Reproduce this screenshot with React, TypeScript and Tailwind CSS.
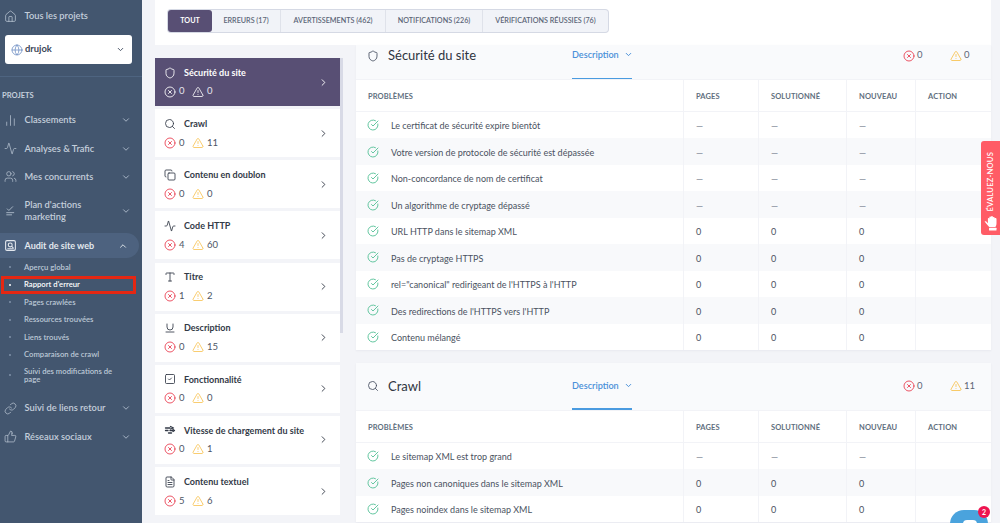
import React from "react";
import { Home, ChevronDown, ChevronUp, ChevronRight, Globe, ChartNoAxesColumn, Activity, Users, Link, ThumbsUp, Shield, Search, Copy, Type, Underline, SquareCheck, FileText, CircleX, TriangleAlert, CircleCheckBig } from "lucide-react";

function PlanIcon({ size = 13, className = "" }: { size?: number; strokeWidth?: number; className?: string }) {
  return (
    <svg width={size} height={size} viewBox="0 0 24 24" fill="none" stroke="currentColor" strokeWidth={1.6} strokeLinecap="round" strokeLinejoin="round" className={className}>
      <path d="M6 9l3 3 7-7" />
      <path d="M5 16h13" />
      <path d="M5 20h9" />
    </svg>
  );
}
function AuditIcon({ size = 13, className = "" }: { size?: number; strokeWidth?: number; className?: string }) {
  return (
    <svg width={size} height={size} viewBox="0 0 24 24" fill="none" stroke="currentColor" strokeWidth={2} strokeLinecap="round" strokeLinejoin="round" className={className}>
      <rect x="3" y="3" width="18" height="18" rx="2.5" />
      <circle cx="11.5" cy="11" r="3.6" />
      <path d="M14.2 13.8L17 16.6" />
      <path d="M7 18h10" />
    </svg>
  );
}
function SpeedIcon({ size = 12, className = "" }: { size?: number; strokeWidth?: number; className?: string }) {
  return (
    <svg width={size} height={size} viewBox="0 0 24 24" fill="none" stroke="currentColor" strokeWidth={2.6} strokeLinecap="round" strokeLinejoin="round" className={className}>
      <path d="M3 8h9" />
      <path d="M3 13h5" />
      <path d="M12 13h6" />
      <path d="M9 18h6" />
      <path d="M13 5l6 3-6 2" />
      <path d="M18 11l3 2-3 2" />
    </svg>
  );
}

const nav1 = [
  { icon: ChartNoAxesColumn, label: "Classements" },
  { icon: Activity, label: "Analyses & Trafic" },
  { icon: Users, label: "Mes concurrents" },
];
const subs = ["Aperçu global", "Rapport d'erreur", "Pages crawlées", "Ressources trouvées", "Liens trouvés", "Comparaison de crawl"];

function NavItem({ icon: Icon, label, h = "h-[28.4px]" }: { icon: any; label: React.ReactNode; h?: string }) {
  return (
    <div className={`flex items-center pl-[4px] pr-[11px] text-[#c3cedb] ${h}`}>
      <Icon size={13} strokeWidth={1.4} className="w-[13px] shrink-0 text-[#b5c1d0]" />
      <div className="ml-[7.5px] flex-1 text-[9.3px] leading-[12px] font-semibold">{label}</div>
      <ChevronDown size={10} strokeWidth={2.2} className="text-[#aebbcc]" />
    </div>
  );
}

function Sidebar() {
  return (
    <aside className="flex h-[523px] w-[142px] shrink-0 flex-col overflow-hidden bg-[#43566f]">
      <div className="flex h-[35px] items-center pb-[3px] pl-[4px] text-[#c3cedb]">
        <Home size={13} strokeWidth={1.3} />
        <span className="ml-[7.5px] text-[9.3px] font-semibold">Tous les projets</span>
      </div>
      <div className="mx-[5px] flex h-[29px] w-[127px] items-center rounded-[3px] bg-white pr-[7px] pl-[6px]">
        <Globe size={12} strokeWidth={1.6} className="text-[#6f8fc4]" />
        <span className="ml-[2px] flex-1 text-[9.4px] font-bold text-[#3b4658]">drujok</span>
        <ChevronDown size={9} strokeWidth={2.6} className="text-[#4a5568]" />
      </div>
      <div className="mt-[12px] h-px bg-[#4e6480]" />
      <div className="mt-[13px] h-[11px] pl-[2px] text-[7.6px] leading-[11px] font-bold text-[#c3cedb]">PROJETS</div>
      <div className="mt-[5px]">
        {nav1.map((n) => (
          <NavItem key={n.label} icon={n.icon} label={n.label} />
        ))}
        <NavItem icon={PlanIcon} h="h-[39px]" label={<>Plan d'actions<br />marketing</>} />
      </div>
      <div className="mt-[3px] flex h-[25px] w-[139px] shrink-0 items-center rounded-r-full bg-[#4d627f] pr-[11px] pl-[4px] text-[#e3e8ee]">
        <AuditIcon size={13} className="shrink-0" />
        <div className="ml-[7.5px] flex-1 text-[9px] font-bold">Audit de site web</div>
        <ChevronUp size={10} strokeWidth={2.2} />
      </div>
      <div className="mt-[1px]">
        {subs.map((s, i) => (
          <div
            key={s}
            className={`-mt-px ml-px flex h-[18.5px] w-[135px] items-center border-[3px] pl-[5px] text-[7.7px] font-semibold ${
              i === 1 ? "border-[#e52713] font-bold text-white" : "border-transparent text-[#bcc8d6]"
            }`}
          >
            <span className={`h-[2px] w-[2px] shrink-0 rounded-full ${i === 1 ? "bg-white" : "bg-[#7f92a8]"}`} />
            <span className="ml-[13px]">{s}</span>
          </div>
        ))}
        <div className="mt-[2px] flex h-[18px] items-center pl-[9px] text-[7.7px] leading-[8.5px] font-semibold text-[#bcc8d6]">
          <span className="h-[2px] w-[2px] shrink-0 rounded-full bg-[#7f92a8]" />
          <span className="ml-[13px] w-[96px]">Suivi des modifications de page</span>
        </div>
      </div>
      <div className="mt-[10px]">
        <NavItem icon={Link} label="Suivi de liens retour" />
        <NavItem icon={ThumbsUp} label="Réseaux sociaux" />
      </div>
    </aside>
  );
}

function Tabs() {
  const tabs = [
    ["ERREURS (17)", "w-[69px]"],
    ["AVERTISSEMENTS (462)", "w-[105px]"],
    ["NOTIFICATIONS (226)", "w-[97px]"],
    ["VÉRIFICATIONS RÉUSSIES (76)", "w-[125px]"],
  ];
  return (
    <div className="flex h-[45px] shrink-0 items-start bg-white pt-[10px] pl-[13px]">
      <div className="flex h-[22px] rounded-[3px] bg-[#f1f3f8] shadow-[0_0_0_1px_#d5d9e4]">
        <div className="flex w-[44px] items-center justify-center rounded-[3px] bg-[#584f74] pt-px text-[7.2px] font-bold text-white">TOUT</div>
        {tabs.map(([t, w], i) => (
          <div key={t} className={`flex items-center justify-center pt-px text-[7.2px] font-semibold text-[#5b6577] ${w} ${i < 3 ? "border-r border-[#dfe2ea]" : ""}`}>
            {t}
          </div>
        ))}
      </div>
    </div>
  );
}

const cards = [
  { icon: Shield, t: "Sécurité du site", e: 0, w: 0 },
  { icon: Search, t: "Crawl", e: 0, w: 11 },
  { icon: Copy, t: "Contenu en doublon", e: 0, w: 0 },
  { icon: Activity, t: "Code HTTP", e: 4, w: 60 },
  { icon: Type, t: "Titre", e: 1, w: 2 },
  { icon: Underline, t: "Description", e: 0, w: 15 },
  { icon: SquareCheck, t: "Fonctionnalité", e: 0, w: 0 },
  { icon: SpeedIcon, t: "Vitesse de chargement du site", e: 0, w: 1 },
  { icon: FileText, t: "Contenu textuel", e: 5, w: 6 },
];

function Card({ c, active }: { c: (typeof cards)[number]; active: boolean }) {
  const Icon = c.icon;
  return (
    <div className={`mb-[3.15px] flex h-[48px] shrink-0 items-center pr-[11px] pl-[9px] ${active ? "bg-[#584f74] text-white" : "bg-white text-[#333a47]"}`}>
      <div className="-mt-px flex-1">
        <div className="flex h-[16px] items-center">
          <Icon size={12} strokeWidth={1.7} className="w-[12px]" />
          <span className="ml-[8px] text-[9px] font-bold">{c.t}</span>
        </div>
        <div className="mt-[4px] flex h-[14px] items-center text-[9.5px]">
          <CircleX size={12} strokeWidth={1.7} className={active ? "text-white" : "text-[#e9384a]"} />
          <span className={`ml-[3px] w-[10px] ${active ? "text-[#e6e4ec]" : "text-[#4d5665]"}`}>{c.e}</span>
          <TriangleAlert size={12} strokeWidth={1.6} className={`ml-[3px] ${active ? "text-white" : "text-[#f8c04d]"}`} />
          <span className={`ml-[3px] ${active ? "text-[#e6e4ec]" : "text-[#4d5665]"}`}>{c.w}</span>
        </div>
      </div>
      <ChevronRight size={11} strokeWidth={2} />
    </div>
  );
}

function Counts({ e, w }: { e: number; w: number }) {
  return (
    <div className="flex items-center text-[9.5px] text-[#5d6676]">
      <CircleX size={12} strokeWidth={1.7} className="text-[#e9384a]" />
      <span className="ml-[2px] w-[33px]">{e}</span>
      <TriangleAlert size={12} strokeWidth={1.7} className="text-[#f8c04d]" />
      <span className="ml-[2px] w-[27px]">{w}</span>
    </div>
  );
}

const grid = "grid grid-cols-[328px_75px_88px_69px_75px]";

function Section({ icon: Icon, title, e, w, clip, rows }: { icon: any; title: string; e: number; w: number; clip?: boolean; rows: [string, boolean][] }) {
  return (
    <section className="shrink-0 bg-white shadow-[0_1px_2px_rgba(60,70,100,0.06)]">
      <div className={`relative flex items-center bg-[#f9fafc] pl-[11px] ${clip ? "h-[34px] pb-[13px]" : "h-[47px]"}`}>
        <Icon size={12} strokeWidth={1.7} className="w-[12px] text-[#454d5e]" />
        <span className="ml-[9px] w-[184px] text-[13px] leading-none text-[#2f3541]">{title}</span>
        <span className="-mt-[2px] flex flex-1 items-center text-[9.1px] font-semibold text-[#4a90d9]">
          Description <ChevronDown size={9} strokeWidth={2.6} className="ml-[5px]" />
        </span>
        <Counts e={e} w={w} />
        <div className="absolute bottom-0 left-[216px] h-[1.5px] w-[60px] bg-[#4a9be0]" />
      </div>
      <div className={`${grid} h-[33px] border-y border-[#f2f3f7] text-[7.5px] font-bold tracking-[0.1px] text-[#5f6f7e]`}>
        {["PROBLÈMES", "PAGES", "SOLUTIONNÉ", "NOUVEAU", "ACTION"].map((h, i) => (
          <div key={h} className={`flex items-center pt-[2px] pl-[12px] ${i < 4 ? "border-r border-[#f2f3f7]" : ""}`}>{h}</div>
        ))}
      </div>
      {rows.map(([t, dash], i) => (
        <div key={t} className={`${grid} h-[26.45px] text-[9px] text-[#4a5261] ${i % 2 ? "bg-[#f8f9fb]" : "bg-white"}`}>
          <div className="flex items-center border-r border-[#f2f3f7] pt-[2px] pl-[11px]">
            <CircleCheckBig size={12} strokeWidth={1.9} className="-mt-[2px] text-[#5cc39b]" />
            <span className="ml-[12px]">{t}</span>
          </div>
          {[0, 1, 2].map((k) => (
            <div key={k} className={`flex items-center border-r border-[#f2f3f7] pt-[2px] pl-[12px] ${dash ? "text-[#7d8593]" : ""}`}>{dash ? "—" : "0"}</div>
          ))}
          <div />
        </div>
      ))}
    </section>
  );
}

const secu: [string, boolean][] = [
  ["Le certificat de sécurité expire bientôt", true],
  ["Votre version de protocole de sécurité est dépassée", true],
  ["Non-concordance de nom de certificat", true],
  ["Un algorithme de cryptage dépassé", true],
  ["URL HTTP dans le sitemap XML", false],
  ["Pas de cryptage HTTPS", false],
  ["rel=\"canonical\" redirigeant de l'HTTPS à l'HTTP", false],
  ["Des redirections de l'HTTPS vers l'HTTP", false],
  ["Contenu mélangé", false],
];
const crawl: [string, boolean][] = [
  ["Le sitemap XML est trop grand", true],
  ["Pages non canoniques dans le sitemap XML", false],
  ["Pages noindex dans le sitemap XML", false],
];

export default function App() {
  return (
    <div className="relative flex h-[523px] w-[1000px] overflow-hidden bg-[#f3f4f8] font-['Lato',sans-serif]">
      <Sidebar />
      <main className="ml-[13px] flex w-[836px] shrink-0 flex-col">
        <Tabs />
        <div className="flex min-h-0 flex-1">
          <div className="relative mt-[13px] mr-[16px] flex w-[185px] shrink-0 flex-col">
            {cards.map((c, i) => (
              <Card key={c.t} c={c} active={i === 0} />
            ))}
            <div className="absolute top-0 left-[185px] h-[275px] w-[3px] bg-[#d8dae6]" />
          </div>
          <div className="flex w-[635px] shrink-0 flex-col gap-[13px]">
            <Section icon={Shield} title="Sécurité du site" e={0} w={0} clip rows={secu} />
            <Section icon={Search} title="Crawl" e={0} w={11} rows={crawl} />
          </div>
        </div>
      </main>
      <div className="absolute top-[141px] right-0 flex h-[94px] w-[19px] flex-col items-center justify-end rounded-l-[3px] bg-[#ff5c66] pb-[4px] text-white">
        <span className="mb-[3px] rotate-180 text-[7.6px] font-semibold tracking-[0.2px] [writing-mode:vertical-rl]">ÉVALUEZ-NOUS</span>
        <svg width="14" height="16" viewBox="0 0 14 16" fill="white">
          <path d="M0.6 6.6C1.3 6 2.4 6.3 3.2 7.4L3.9 8.3V3.4C3.9 2.7 5.2 2.7 5.4 3.4V2C5.4 1.2 6.9 1.2 7.1 2V1.5C7.1.7 8.7.7 8.9 1.6V2.4C9.2 1.7 10.6 1.8 10.7 2.7V3.4C11.1 2.9 12.4 3 12.5 4V8.2C12.5 10 12 11 11.4 11.9H5.2C4.4 11.3 3.4 9.9 2.6 9L0.6 6.6Z" />
          <rect x="5" y="12.8" width="7.5" height="2.8" rx="0.5" />
        </svg>
      </div>
      <div className="absolute top-[510px] left-[950px] h-[40px] w-[38px] rounded-[14px] bg-[#4aa3dd]">
        <div className="absolute top-[10px] left-[13px] h-[12px] w-[14px] rounded-[4px] bg-white" />
      </div>
      <div className="absolute top-[506px] left-[978px] flex h-[12px] w-[12px] items-center justify-center rounded-full bg-[#ee1450] text-[7px] font-bold text-white">2</div>
    </div>
  );
}
